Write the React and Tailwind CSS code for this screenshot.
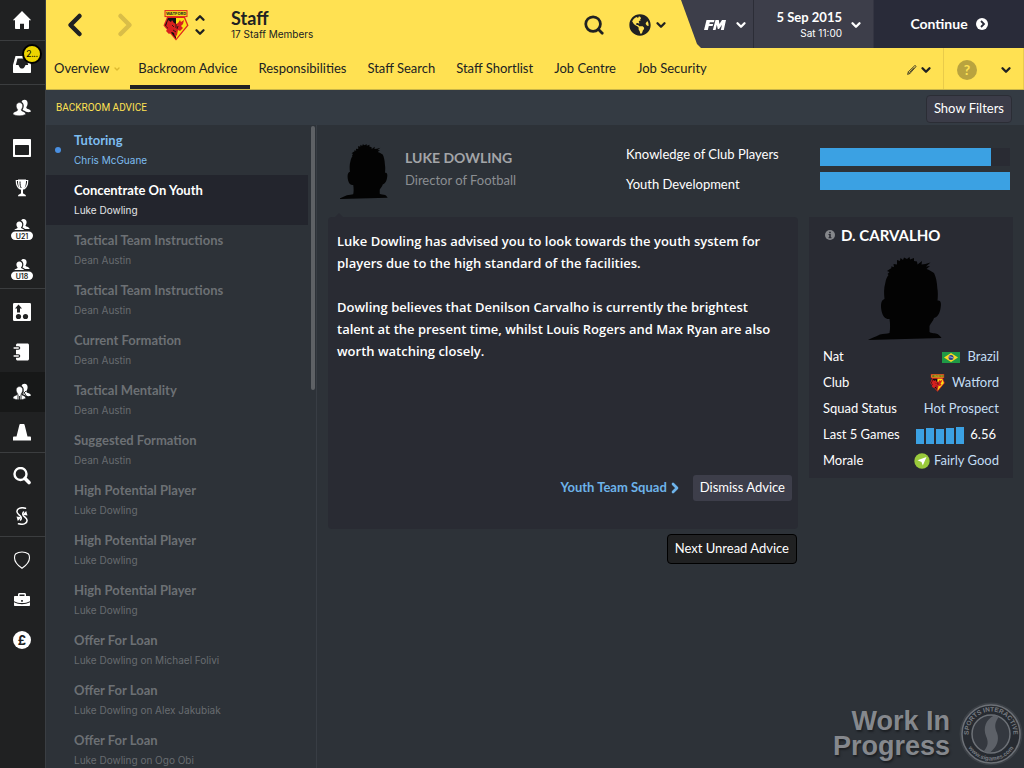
import { ChevronDown, ChevronRight, ChevronLeft, ChevronUp, Search } from 'lucide-react';
import { FaGlobeAmericas } from 'react-icons/fa';

const tabs = [
  'Overview',
  'Backroom Advice',
  'Responsibilities',
  'Staff Search',
  'Staff Shortlist',
  'Job Centre',
  'Job Security',
];

const adviceList = [
  { id: 1, title: 'Tutoring', from: 'Chris McGuane', state: 'unread' },
  { id: 2, title: 'Concentrate On Youth', from: 'Luke Dowling', state: 'selected' },
  { id: 3, title: 'Tactical Team Instructions', from: 'Dean Austin', state: 'read' },
  { id: 4, title: 'Tactical Team Instructions', from: 'Dean Austin', state: 'read' },
  { id: 5, title: 'Current Formation', from: 'Dean Austin', state: 'read' },
  { id: 6, title: 'Tactical Mentality', from: 'Dean Austin', state: 'read' },
  { id: 7, title: 'Suggested Formation', from: 'Dean Austin', state: 'read' },
  { id: 8, title: 'High Potential Player', from: 'Luke Dowling', state: 'read' },
  { id: 9, title: 'High Potential Player', from: 'Luke Dowling', state: 'read' },
  { id: 10, title: 'High Potential Player', from: 'Luke Dowling', state: 'read' },
  { id: 11, title: 'Offer For Loan', from: 'Luke Dowling on Michael Folivi', state: 'read' },
  { id: 12, title: 'Offer For Loan', from: 'Luke Dowling on Alex Jakubiak', state: 'read' },
  { id: 13, title: 'Offer For Loan', from: 'Luke Dowling on Ogo Obi', state: 'read' },
];

const titleColors = {
  unread: 'text-[#7dbdf0]',
  selected: 'text-white',
  read: 'text-[#6c7074]',
};

const fromColors = {
  unread: 'text-[#7dbdf0]',
  selected: 'text-[#e4e5e8]',
  read: 'text-[#686c70]',
};

const attributes = [
  { name: 'Knowledge of Club Players', value: 90 },
  { name: 'Youth Development', value: 100 },
];

const lastGames = [15, 16, 15, 16, 17];

const people = (
  <>
    <path d="M11.500 .8c2 0 3.300 1.500 3.100 3.700-.1 1.600-.7 3-1.300 3.700 0 1 .4 1.300 1.700 1.700 1.800.6 2.800 1.300 3 2.700-1.600.7-3.500.7-5 .2-1-.9-2.200-1.500-3.500-1.800.8-1.300 1.300-3 1.200-4.700C10.600 4.800 9.700 3.600 8.600 3c.3-1.300 1.400-2.200 2.900-2.200z" />
    <path d="M6.500 3.600c2 0 3.300 1.500 3.200 3.500-.1 1.500-.6 2.700-1.400 3.400 0 1.100.3 1.500 1.700 1.900 2 .6 2.700 1.500 2.500 3-3.600 1.900-9 1.900-12.500 0-.1-1.600.8-2.500 2.700-3 1.400-.4 1.900-.8 1.900-1.900-.8-.7-1.300-1.900-1.400-3.400-.1-2 1.300-3.500 3.300-3.500z" stroke="#202122" strokeWidth=".5" />
  </>
);

function SquadIcon({ label }) {
  return (
    <svg viewBox="0 0 22 22" className="mt-1 h-[22px] w-[22px]" fill="currentColor">
      <path d="M12.500 0c2 0 3.200 1.400 3.100 3.300-.1 1.400-.6 2.600-1.200 3.300.2 1 3.200 1.200 4.400 3.400H14c-.8-1-2-1.300-2.500-1.600 1-1.500 1.200-3.700.2-5.300-.4-.7-1-1.200-1.700-1.500.5-1 1.400-1.600 2.500-1.600z" />
      <path d="M8.300 2.500c1.900 0 3 1.400 2.900 3.200-.1 1.200-.6 2.200-1.300 2.800.2 1.300 2.800 1 3.300 2.500H3.300C4 9.500 6.500 9.800 6.700 8.500 6 7.900 5.500 6.900 5.400 5.700c-.1-1.800 1-3.200 2.900-3.200z" />
      <rect x="0" y="12.500" width="22" height="8.500" rx="4.200" />
      <text x="11" y="19.500" textAnchor="middle" fontSize="7" fontWeight="600" fill="#1d1e20" fontFamily="Inter, sans-serif">
        {label}
      </text>
    </svg>
  );
}

function Icon({ children }) {
  return (
    <svg viewBox="0 0 18 18" className="h-[18px] w-[18px]" fill="currentColor">
      {children}
    </svg>
  );
}

const navGroups = [
  [
    {
      label: 'Home',
      icon: <Icon><path d="M9 0l9.300 9.200H16v8c0 .6-.3.800-.8.800H11v-5.300H7V18H2.800c-.5 0-.8-.2-.8-.8v-8H-.3z" /></Icon>,
    },
  ],
  [
    {
      label: 'Inbox',
      badge: '2...',
      icon: (
        <Icon>
          <path fillRule="evenodd" d="M2.500 1h13L18 10v7c0 .6-.4 1-1 1H1c-.6 0-1-.4-1-1v-7zM4.500 3.500L2.800 10H5.500c.8 2.500 2 3.600 3.500 3.600s2.700-1.100 3.500-3.600h2.700L13.500 3.500z" />
        </Icon>
      ),
    },
  ],
  [
    { label: 'Squad', icon: <Icon>{people}</Icon> },
    {
      label: 'Calendar',
      icon: <Icon><path fillRule="evenodd" d="M1 0h16c.6 0 1 .4 1 1v16c0 .6-.4 1-1 1H1c-.6 0-1-.4-1-1V1c0-.6.4-1 1-1zm1.700 6c-.5 0-.7.300-.7.700v8.600c0 .4.300.7.700.7h12.600c.4 0 .7-.3.700-.7V6.700c0-.4-.3-.7-.7-.7z" /></Icon>,
    },
    {
      label: 'Competitions',
      icon: (
        <Icon>
          <path d="M5 .5h8c.2 5-.8 9-3 10.500v3c0 1 3 1.200 3 3.300H5c0-2.100 3-2.300 3-3.300v-3C5.800 9.500 4.800 5.500 5 .5z" />
          <path d="M5 1.500H3.300c0 4 1.200 7 3.700 8.500M13 1.500h1.700c0 4-1.200 7-3.700 8.500" fill="none" stroke="currentColor" strokeWidth="1.200" />
          <path d="M7 2.500c0 3 .3 5 1.200 6.500" fill="none" stroke="#202122" strokeWidth="1" />
        </Icon>
      ),
    },
    { label: 'Under 21s', icon: <SquadIcon label="U21" /> },
    { label: 'Under 18s', icon: <SquadIcon label="U18" /> },
  ],
  [
    {
      label: 'Tactics',
      icon: (
        <Icon>
          <rect width="18" height="18" rx="1.200" />
          <g fill="#202122">
            <path d="M5.500 1.500L9 5.500H7V9.500H4V5.500H2z" />
            <circle cx="5.500" cy="13.500" r="2.600" />
            <circle cx="12.500" cy="13.500" r="2.600" />
          </g>
        </Icon>
      ),
    },
    {
      label: 'Team Report',
      icon: (
        <Icon>
          <path d="M5 .5h9c1.500 0 2 .5 2 2v13c0 1.500-.5 2-2 2H5c-1.500 0-2-.5-2-2v-13c0-1.500.5-2 2-2z" />
          <path d="M1.500 5h4M1.500 13h4" stroke="#202122" strokeWidth="3.600" strokeLinecap="round" />
          <path d="M1.200 5h4M1.200 13h4" stroke="currentColor" strokeWidth="1.600" strokeLinecap="round" />
        </Icon>
      ),
    },
    {
      label: 'Staff',
      active: true,
      icon: (
        <Icon>
          {people}
          <path d="M5 11.500v6M8 11.500v6M6.500 13v4M10.500 8.500l3.500 5.500M13 8l-2.500 2.500" stroke="#171818" strokeWidth=".9" fill="none" />
        </Icon>
      ),
    },
    {
      label: 'Training',
      icon: <Icon><path d="M7.500 1h3c.7 0 1 .5 1.200 1.300l2.800 11.200h2.300c.8 0 1.200.5 1.200 1.300V17.500H0v-2.700c0-.8.400-1.300 1.200-1.300h2.300L6.300 2.300C6.500 1.500 6.800 1 7.500 1z" /></Icon>,
    },
  ],
  [
    {
      label: 'Scouting',
      icon: (
        <Icon>
          <circle cx="7.500" cy="7" r="6" fill="none" stroke="currentColor" strokeWidth="2.400" />
          <path d="M12 11.500l4 4" stroke="currentColor" strokeWidth="3.600" strokeLinecap="round" />
        </Icon>
      ),
    },
    {
      label: 'Transfers',
      icon: (
        <Icon>
          <g fill="none" stroke="currentColor" strokeWidth="1.500" strokeLinecap="round">
            <path d="M12.500 1.200C7.500-.2 3.500 1.800 4 5c.3 2 2.500 2.800 3.700 4.500.8 1.200.6 2.500-.2 3.500" />
            <path d="M5.500 16.800c5 1.400 9-.6 8.500-3.800-.3-2-2.500-2.800-3.700-4.500-.8-1.200-.6-2.500.2-3.500" />
          </g>
          <path d="M3.500 9.500l5 .8L4.800 14zM14.500 8.500l-5-.8L13.200 4z" />
        </Icon>
      ),
    },
  ],
  [
    {
      label: 'Club',
      icon: <Icon><path d="M9 1c2.500 0 4.500.5 6.200 1.700 1 .8 1.300 2.200 1.300 4C16.500 10 13 14.500 9 17.300 5 14.500 1.500 10 1.500 6.700c0-1.800.3-3.200 1.300-4C4.500 1.500 6.500 1 9 1z" fill="none" stroke="currentColor" strokeWidth="1.100" /></Icon>,
    },
    {
      label: 'Board',
      icon: (
        <Icon>
          <path fillRule="evenodd" d="M6.500 2h5c.9 0 1.500.6 1.500 1.500V5h3c.6 0 1 .4 1 1v4.200c-2.500 1.300-5.200 1.900-8 1.900s-5.500-.6-8-1.900V6c0-.6.4-1 1-1h3V3.500C5 2.600 5.600 2 6.500 2zm0 1.500V5h5V3.500z" />
          <path d="M1 11.300c2.500 1.300 5.200 1.900 8 1.900s5.500-.6 8-1.900V14c0 .6-.4 1-1 1H2c-.6 0-1-.4-1-1z" />
          <rect x="8.200" y="9" width="1.600" height="1.800" fill="#202122" />
        </Icon>
      ),
    },
    {
      label: 'Finances',
      icon: (
        <Icon>
          <circle cx="9" cy="9" r="9" />
          <text x="9" y="13.500" textAnchor="middle" fontSize="13" fontWeight="700" fill="#202122" fontFamily="Inter, sans-serif">£</text>
        </Icon>
      ),
    },
  ],
];

function Crest({ className }) {
  return (
    <svg viewBox="0 0 26 31" className={className}>
      <path d="M4 7h18l3.500 8.500L13 30.500.5 15.500z" fill="#e0231f" />
      <path d="M5 8h8v20.800L2 15.300z" fill="#111" />
      <path d="M13 8h8l3 7.300-11 13.500z" fill="#fbe216" />
      <path d="M5 10l3 2 1-2 2 3 2 1 2-1 2-3 1 2 3-2-1 4-2 2 2 2-3 3-2-1-1 5-2 2-1-4-2-1-3 2-3-3 2-3-2-2z" fill="#d8201f" />
      <path d="M9 15l2 2M15 16l-1 3M10 20l3 2M13 14v4" stroke="#111" strokeWidth=".8" />
      <rect x="2" y=".6" width="22" height="6" fill="#f5dc1c" stroke="#e0231f" strokeWidth="1" />
      <text x="13" y="5.200" textAnchor="middle" fontSize="4" fontWeight="700" fill="#222" fontFamily="Inter, sans-serif">WATFORD</text>
    </svg>
  );
}

function Silhouette({ className }) {
  return (
    <svg viewBox="0 0 74 83" className={className} fill="#030303">
      <path d="M0 83c3-2 7-3 12-5.500 4-.8 7-.5 9.500-1.500.8-4 .8-9 0-14C18 62.500 15 60 13.800 55c-1.200-5-1.500-12 2.700-13-.5-5-.8-11 .8-16 .7-4 1.700-6 3.200-8l-1-1 2-2-2.500-1 4.500-3-.5-1.500 3 .5-.5-3 3.500.5V3l3 1 .5-3 2.500 2 1-2.500L39 2l2.500-2 .5 2.500L46 1v3l3 .5.500 3L54 4l-.5 3.500 4-.5 5-1.500-4.500 4 4-.5-3.500 3c3 1 4.500 2 7.500 4 2 4 3 9 3.300 15 .7 4 .7 8 .2 12.500 3.500-.5 4 3 3 8-.8 4.500-2.500 8.500-6.500 9.500-.5 3-3.500 5-4.500 8v6c1.500 1.500 6 1 8 2 2 1.200 3 2.500 4 4z" />
    </svg>
  );
}

function BrazilFlag() {
  return (
    <svg viewBox="0 0 18 11" className="h-[11px] w-[18px]">
      <rect width="18" height="11" fill="#1f9a46" />
      <path d="M9 1l7 4.500L9 10 2 5.500z" fill="#f6d928" />
      <circle cx="9" cy="5.500" r="2.500" fill="#24408e" />
      <path d="M6.700 5c1.500-.3 3.200.1 4.500 1.200" stroke="#fff" strokeWidth=".6" fill="none" />
    </svg>
  );
}

function MoraleIcon() {
  return (
    <svg viewBox="0 0 16 16" className="h-4 w-4">
      <circle cx="8" cy="8" r="7.700" fill="#9aca3c" />
      <path d="M12.500 4L8.800 12.500 7.500 9 3.500 7.300z" fill="#fff" />
    </svg>
  );
}

function StudioBadge() {
  return (
    <svg viewBox="0 0 64 64" className="h-16 w-16">
      <circle cx="32" cy="32" r="31.500" fill="#4a4e54" opacity=".5" />
      <circle cx="32" cy="32" r="29" fill="#272b31" stroke="#6d7177" strokeWidth="1.500" />
      <circle cx="32" cy="32" r="19" fill="#34383f" stroke="#6d7177" strokeWidth="1.500" />
      <path d="M35 13.500c4 .2 5 1 4 2.500-4 6-3 10-1 15 2.500 7 0 14-7 19.500-4 .3-6.500-.5-6-1.500 5-6 4-10 2-15-3-8-.5-16 8-20.500z" fill="#5d6168" />
      <path id="arc-top" d="M9.500 32a22.500 22.500 0 0 1 45 0" fill="none" />
      <path id="arc-bottom" d="M5.500 32a26.500 26.500 0 0 0 53 0" fill="none" />
      <g fill="#777b81" fontFamily="Liberation Sans, sans-serif" fontWeight="700" textAnchor="middle">
        <text fontSize="6.500">
          <textPath href="#arc-top" startOffset="50%">SPORTS INTERACTIVE</textPath>
        </text>
        <text fontSize="6">
          <textPath href="#arc-bottom" startOffset="50%">www.sigames.com</textPath>
        </text>
      </g>
    </svg>
  );
}

function Sidebar() {
  return (
    <nav className="flex w-[46px] shrink-0 flex-col border-r border-[#3a3e43] bg-[#202122] text-white">
      {navGroups.map((group, index) => (
        <div
          key={group[0].label}
          className={index === 0 ? '' : 'border-t border-[#3b3d3f] pt-[3px]'}
        >
          {group.map((item) => (
            <button
              key={item.label}
              aria-label={item.label}
              className={`relative flex h-10 w-full items-center justify-center pr-[2px] ${
                item.active ? 'bg-[#171818]' : ''
              }`}
            >
              {item.icon}
              {item.badge && (
                <span className="absolute top-0 right-[3px] flex h-5 w-5 items-center justify-center rounded-full border-2 border-black bg-[#ecd500] text-[9px] text-black">
                  {item.badge}
                </span>
              )}
            </button>
          ))}
        </div>
      ))}
    </nav>
  );
}

function Header() {
  return (
    <header className="border-b border-[#c9b548] bg-[#ffe152] text-[#202122]">
      <div className="flex h-12">
        <div className="flex flex-1 items-center pt-[2px] pr-[13px] pl-[15px]">
          <button aria-label="Back" className="flex w-7 justify-center">
            <ChevronLeft className="h-9 w-9 shrink-0" strokeWidth={3} />
          </button>
          <button aria-label="Forward" className="ml-[22px] flex w-7 justify-center text-[#d9bd48]">
            <ChevronRight className="h-9 w-9 shrink-0" strokeWidth={3} />
          </button>
          <Crest className="ml-6 h-[31px] w-[26px]" />
          <div className="ml-[3px] flex flex-col">
            <button aria-label="Previous club">
              <ChevronUp className="h-[14px] w-4" strokeWidth={4} />
            </button>
            <button aria-label="Next club">
              <ChevronDown className="h-[14px] w-4" strokeWidth={4} />
            </button>
          </div>
          <div className="ml-[23px] flex-1 pb-[3px]">
            <h1 className="text-lg leading-5 font-bold">Staff</h1>
            <p className="font-[Inter,sans-serif] text-[10px] leading-3">17 Staff Members</p>
          </div>
          <button aria-label="Search" className="mr-6">
            <Search className="h-[22px] w-[22px]" strokeWidth={3} />
          </button>
          <button aria-label="World" className="flex items-center gap-[3px]">
            <FaGlobeAmericas className="h-[22px] w-[22px]" />
            <ChevronDown className="h-[14px] w-[14px]" strokeWidth={4} />
          </button>
        </div>
        <div className="flex bg-[#3d3e4a] text-white [clip-path:polygon(0_0,100%_0,100%_100%,20px_100%,16px_44px)]">
          <button aria-label="FM menu" className="flex w-[73px] items-center justify-end gap-2 border-r border-[#2c2d37] pt-[2px] pr-[5px]">
            <svg viewBox="0 0 22 10" className="h-[10px] w-[22px]" fill="currentColor">
              <path d="M2.500 0h8L10 2.300H5.800l-.4 1.600h3.800l-.6 2.200H4.800L3.800 10H0zM11.500 0h3.300l.6 4L18 0h4l-2.200 10h-3l1.200-5.200-3 4.200h-1.200l-1-4.200-1.200 5.200H8.800z" />
            </svg>
            <ChevronDown className="h-[14px] w-[14px]" strokeWidth={4} />
          </button>
          <button className="flex w-[119px] items-center justify-end gap-[7px] pt-[2px] pr-[10px] text-right">
            <span>
              <span className="block text-[13px] leading-4 font-bold">5 Sep 2015</span>
              <span className="block font-[Inter,sans-serif] text-[10px] leading-4">Sat 11:00</span>
            </span>
            <ChevronDown className="h-[14px] w-[14px]" strokeWidth={4} />
          </button>
          <button className="flex w-[151px] items-center justify-center gap-2 border-l border-[#343542] bg-[#292b39] text-sm font-bold">
            Continue
            <svg viewBox="0 0 12 12" className="h-3 w-3">
              <circle cx="6" cy="6" r="6" fill="#fff" />
              <path d="M5 3l3 3-3 3" stroke="#292b39" strokeWidth="1.800" fill="none" />
            </svg>
          </button>
        </div>
      </div>
      <div className="flex h-[41px] justify-between">
        <div className="flex">
          {tabs.map((tab) => (
            <a
              key={tab}
              href="#"
              className={`flex items-center border-b-4 pt-1 pr-[13px] pl-2 text-[13px] whitespace-nowrap ${
                tab === 'Backroom Advice' ? 'border-[#202122]' : 'border-transparent'
              }`}
            >
              {tab}
              {tab === 'Overview' && (
                <ChevronDown className="-mr-1 ml-1 h-2 w-2 text-[#dcb92f]" strokeWidth={4} />
              )}
            </a>
          ))}
        </div>
        <div className="flex items-center">
          <button aria-label="Edit view" className="flex items-center gap-[2px] pt-[2px] pr-[10px]">
            <svg viewBox="0 0 10 10" className="h-[10px] w-[10px]" fill="none" stroke="currentColor" strokeWidth=".8">
              <path d="M.6 9.400l.8-2.700L7.700.7c.6-.5 1.600.4 1.100 1.100L2.900 8.500zM1.400 6.700l1.500 1.800M7 2.700L3 7" />
            </svg>
            <ChevronDown className="h-[14px] w-[14px]" strokeWidth={4} />
          </button>
          <div className="flex h-full items-center gap-[22px] border-r border-l border-[#e9cb4a] pt-[2px] pr-[10px] pl-[13px]">
            <button aria-label="Help" className="flex h-5 w-5 items-center justify-center rounded-full bg-[#b9a33f] text-sm font-bold text-[#ffe152]">
              ?
            </button>
            <button aria-label="More">
              <ChevronDown className="h-[14px] w-[14px]" strokeWidth={4} />
            </button>
          </div>
        </div>
      </div>
    </header>
  );
}

function AdviceList() {
  return (
    <div className="flex w-[271px] shrink-0 overflow-hidden border-r border-[#383d44]">
      <ul className="w-[262px]">
        {adviceList.map((item) => (
          <li key={item.id}>
            <button
              className={`relative flex h-[50px] w-full flex-col justify-center pl-7 text-left ${
                item.state === 'selected' ? 'bg-[#23252d]' : ''
              }`}
            >
              {item.state === 'unread' && (
                <span className="absolute top-[22px] left-[9px] h-[6px] w-[6px] rounded-full bg-[#4a90e2]" />
              )}
              <span className={`text-[13px] leading-5 font-bold ${titleColors[item.state]}`}>
                {item.title}
              </span>
              <span className={`font-[Inter,sans-serif] text-[10px] leading-5 ${fromColors[item.state]}`}>
                {item.from}
              </span>
            </button>
          </li>
        ))}
      </ul>
      <div className="mt-px ml-[3px] h-[264px] w-1 rounded-full bg-[#5e6165]" />
    </div>
  );
}

function DetailRow({ label, children }) {
  return (
    <div className="flex h-[26px] items-center justify-between">
      <dt className="text-white">{label}</dt>
      <dd className="flex items-center text-[#c3ddf3]">{children}</dd>
    </div>
  );
}

function PlayerCard() {
  return (
    <section className="w-[204px] shrink-0 self-start bg-[#292b33] px-[14px] pt-2 pb-1">
      <h2 className="flex items-center gap-[6px] text-[15px] leading-5 font-bold text-white">
        <svg viewBox="0 0 10 10" className="ml-[2px] h-[10px] w-[10px]">
          <circle cx="5" cy="5" r="5" fill="#85878b" />
          <path d="M4.200 1.800h1.600v1.400H4.200zM3.500 4h2.300v3.300h.7v1h-3v-1h.7V5h-.7z" fill="#292b33" />
        </svg>
        D. CARVALHO
      </h2>
      <Silhouette className="mt-3 mb-1 ml-[45px] h-[83px] w-[74px]" />
      <dl className="text-[13px]">
        <DetailRow label="Nat">
          <span className="mr-2"><BrazilFlag /></span>
          Brazil
        </DetailRow>
        <DetailRow label="Club">
          <Crest className="mr-[6px] h-[18px] w-[17px]" />
          Watford
        </DetailRow>
        <DetailRow label="Squad Status">Hot Prospect</DetailRow>
        <DetailRow label="Last 5 Games">
          <span className="flex items-end gap-[2px]">
            {lastGames.map((height, index) => (
              <span key={index} className="w-2 bg-[#3ba1e3]" style={{ height }} />
            ))}
          </span>
          <span className="mx-[3px] ml-[6px] text-white">6.56</span>
        </DetailRow>
        <DetailRow label="Morale">
          <span className="mr-1"><MoraleIcon /></span>
          Fairly Good
        </DetailRow>
      </dl>
    </section>
  );
}

function StaffSummary() {
  return (
    <div className="flex h-[92px] pr-[3px]">
      <Silhouette className="mt-[19px] ml-[11px] h-[55px] w-[49px]" />
      <div className="ml-[17px] flex-1 pt-[21px]">
        <h2 className="text-sm leading-6 font-bold text-[#a3a5a8]">LUKE DOWLING</h2>
        <p className="text-[13px] leading-5 text-[#8b8e92]">Director of Football</p>
      </div>
      <div className="w-[194px] pt-[14px] text-[13px] leading-[30px] text-white">
        {attributes.map((attribute) => (
          <p key={attribute.name}>{attribute.name}</p>
        ))}
      </div>
      <div className="flex w-[190px] flex-col gap-[6px] pt-[23px]">
        {attributes.map((attribute) => (
          <div key={attribute.name} className="h-[18px] bg-[#292b33]">
            <div className="h-full bg-[#3ba1e3]" style={{ width: `${attribute.value}%` }} />
          </div>
        ))}
      </div>
    </div>
  );
}

function App() {
  return (
    <div className="relative flex h-screen overflow-hidden bg-[#2d3238] font-[Lato,sans-serif]">
      <Sidebar />
      <div className="flex min-w-0 flex-1 flex-col">
        <Header />
        <div className="flex h-[35px] shrink-0 items-center justify-between bg-[#343b43] pr-3 pl-[10px]">
          <h2 className="font-[Roboto,sans-serif] text-[10px] text-[#ffe152]">BACKROOM ADVICE</h2>
          <button className="mt-[2px] h-7 rounded border border-[#2b2d35] bg-[#3b3c48] px-[7px] text-[13px] text-white">
            Show Filters
          </button>
        </div>

        <div className="flex min-h-0 flex-1">
          <AdviceList />
          <main className="flex-1 pr-[11px] pl-[11px]">
            <StaffSummary />
            <div className="flex gap-[11px]">
              <div className="flex-1">
                <article className="relative flex h-[312px] flex-col justify-between rounded bg-[#292b33] pt-[13px] pr-[6px] pb-7 pl-[9px]">
                  <span className="absolute -top-1 left-[7px] border-x-4 border-b-4 border-x-transparent border-b-[#292b33]" />
                  <div className="space-y-[22px] pr-2 font-['Open_Sans',sans-serif] text-[13px] leading-[22px] font-semibold text-white">
                    <p>
                      Luke Dowling has advised you to look towards the youth system for players due to the high
                      standard of the facilities.
                    </p>
                    <p>
                      Dowling believes that Denilson Carvalho is currently the brightest talent at the present
                      time, whilst Louis Rogers and Max Ryan are also worth watching closely.
                    </p>
                  </div>
                  <div className="flex items-center justify-end gap-[10px]">
                    <a href="#" className="flex items-center text-[13px] font-bold text-[#6db3ea]">
                      Youth Team Squad
                      <ChevronRight className="h-4 w-4" strokeWidth={4} />
                    </a>
                    <button className="h-[26px] rounded-[3px] bg-[#3d3e4a] px-[7px] text-[13px] text-white">
                      Dismiss Advice
                    </button>
                  </div>
                </article>
                <div className="flex justify-end pt-[5px] pr-px">
                  <button className="h-[30px] rounded border border-black bg-[#202122] px-[7px] text-[13px] text-white">
                    Next Unread Advice
                  </button>
                </div>
              </div>
              <PlayerCard />
            </div>
          </main>
        </div>
      </div>

      <div className="pointer-events-none absolute right-px bottom-0.5 flex items-center gap-[9px]">
        <p className="text-right font-['Liberation_Sans',Arial,sans-serif] text-[27px] leading-[25px] font-bold text-[#85888d] [text-shadow:1px_2px_2px_#1c1f23]">
          Work In
          <br />
          Progress
        </p>
        <StudioBadge />
      </div>
    </div>
  );
}

export default App;
